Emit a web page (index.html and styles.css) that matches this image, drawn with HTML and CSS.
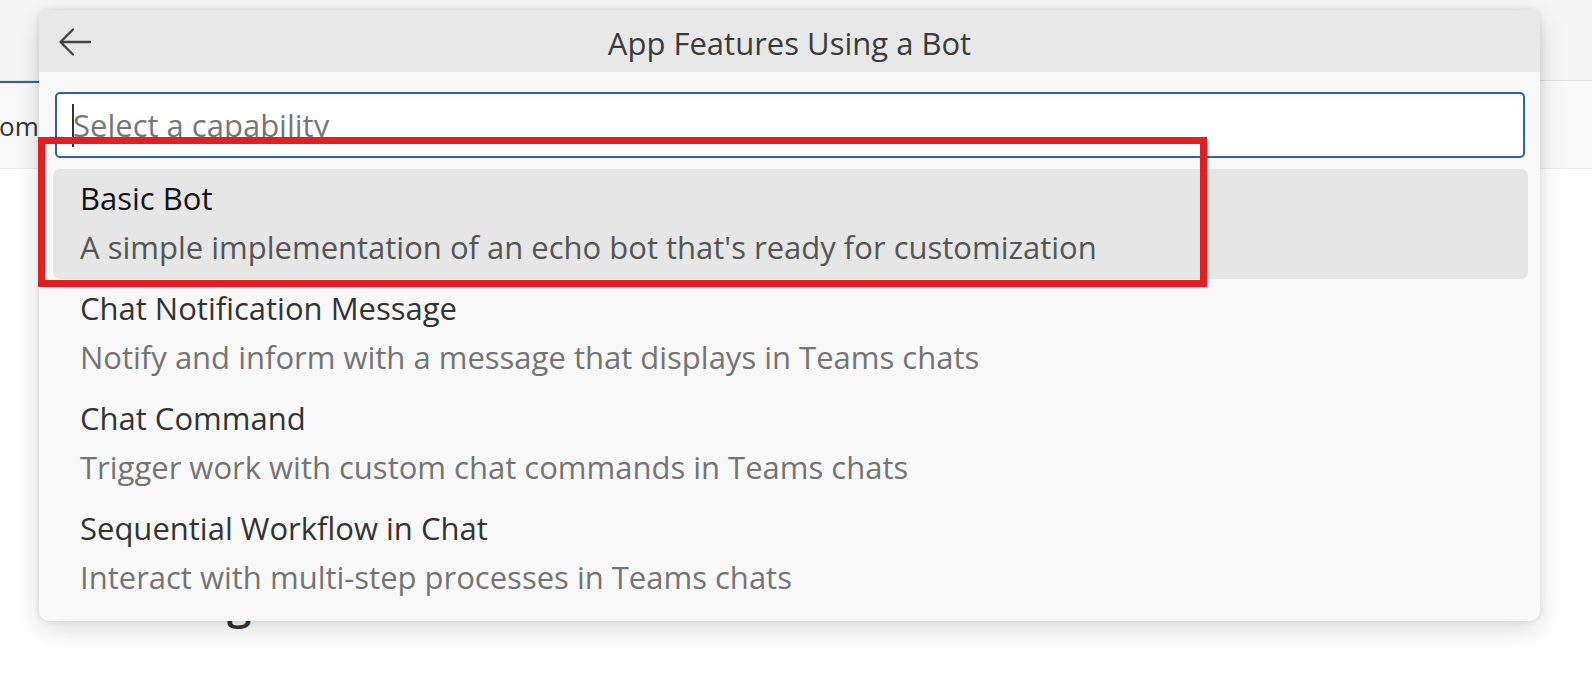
FILE: index.html
```html
<!DOCTYPE html>
<html lang="en">
<head>
<meta charset="utf-8">
<title>App Features Using a Bot</title>
<link rel="stylesheet" href="styles.css">
</head>
<body>
<div class="page">
  <div class="topbar"></div>
  <div class="tabline"><div class="tabline-active"></div></div>
  <div class="toolbar"><span class="crumb">om</span></div>
  <div class="content"><h1 class="heading">Debug</h1></div>
</div>

<div class="quickpick">
  <div class="qp-header">
    <div class="qp-back">
      <svg width="34" height="30" viewBox="0 0 34 30" aria-hidden="true">
        <path d="M2.5 15 H32 M15 2.5 L2.5 15 L15 27.5" fill="none" stroke="#424242" stroke-width="2.3" stroke-linecap="round" stroke-linejoin="round"/>
      </svg>
    </div>
    <div class="qp-title">App Features Using a Bot</div>
    <div class="qp-spacer"></div>
  </div>
  <div class="qp-body">
    <div class="qp-input"><span class="caret"></span><span class="placeholder">Select a capability</span></div>
    <ul class="qp-list">
      <li class="qp-item selected">
        <div class="qp-label">Basic Bot</div>
        <div class="qp-desc">A simple implementation of an echo bot that's ready for customization</div>
      </li>
      <li class="qp-item">
        <div class="qp-label">Chat Notification Message</div>
        <div class="qp-desc">Notify and inform with a message that displays in Teams chats</div>
      </li>
      <li class="qp-item">
        <div class="qp-label">Chat Command</div>
        <div class="qp-desc">Trigger work with custom chat commands in Teams chats</div>
      </li>
      <li class="qp-item">
        <div class="qp-label">Sequential Workflow in Chat</div>
        <div class="qp-desc">Interact with multi-step processes in Teams chats</div>
      </li>
    </ul>
  </div>
</div>

<div class="annotation"></div>
</body>
</html>
```

FILE: styles.css
```css
* { box-sizing: border-box; }

html, body {
  margin: 0;
  padding: 0;
  background: #ffffff;
  font-family: "Open Sans", "Noto Sans", sans-serif;
  overflow: hidden;
}

.page {
  width: 1592px;
  height: 677px;
}

.topbar {
  height: 81px;
  background: #f5f5f5;
  border-bottom: 1px solid #e2e2e2;
}

.tabline {
  height: 2px;
  background: #f8f8f8;
}

.tabline-active {
  width: 600px;
  height: 2px;
  background: #2f5db3;
}

.toolbar {
  height: 86px;
  background: #f8f8f8;
  border-bottom: 1px solid #ededed;
  padding-top: 2px;
  line-height: 83px;
  font-size: 26px;
  color: #333333;
}

.crumb {
  margin-left: -1px;
}

.content {
  padding-left: 114px;
}

.heading {
  margin: 403px 0 0;
  font-size: 44px;
  line-height: 60px;
  font-weight: 600;
  color: #333333;
}

/* Quick pick dialog */
.quickpick {
  position: absolute;
  left: 39px;
  top: 10px;
  width: 1501px;
  height: 611px;
  background: #f8f8f8;
  border-radius: 10px;
  overflow: hidden;
  box-shadow: 0 0 6px rgba(0, 0, 0, 0.10), 0 8px 26px rgba(0, 0, 0, 0.14);
  font-size: 31px;
}

.qp-header {
  height: 62px;
  background: #e8e8e8;
  display: grid;
  grid-template-columns: 1fr auto 1fr;
  align-items: start;
}

.qp-back {
  padding: 17px 0 0 19px;
  line-height: 0;
}

.qp-title {
  padding-top: 5px;
  line-height: 56px;
  color: #3b3b3b;
  white-space: nowrap;
}

.qp-body {
  padding: 20px 12px 12px 14px;
}

.qp-input {
  margin: 0 3px 0 2px;
  height: 66px;
  border: 2px solid #2f5db3;
  border-radius: 5px;
  background: #ffffff;
  padding-left: 15px;
  display: flex;
  align-items: center;
  line-height: 62px;
}

.caret {
  width: 2px;
  height: 43px;
  background: #333333;
  flex: none;
}

.placeholder {
  margin-left: -1px;
  color: #767676;
  white-space: nowrap;
}

.qp-list {
  list-style: none;
  margin: 11px 0 0;
  padding: 0;
}

.qp-item {
  height: 110px;
  padding: 5px 0 7px 27px;
  border-radius: 7px;
  line-height: 49px;
  white-space: nowrap;
}

.qp-item.selected {
  background: #e6e6e6;
}

.qp-label {
  color: #333333;
}

.qp-desc {
  color: #747474;
}

.qp-item.selected .qp-label {
  color: #141414;
}

.qp-item.selected .qp-desc {
  color: #555555;
}

/* Red highlight annotation */
.annotation {
  position: absolute;
  left: 38px;
  top: 137px;
  width: 1169px;
  height: 150px;
  border: 7px solid #e51d1f;
  pointer-events: none;
}
```
